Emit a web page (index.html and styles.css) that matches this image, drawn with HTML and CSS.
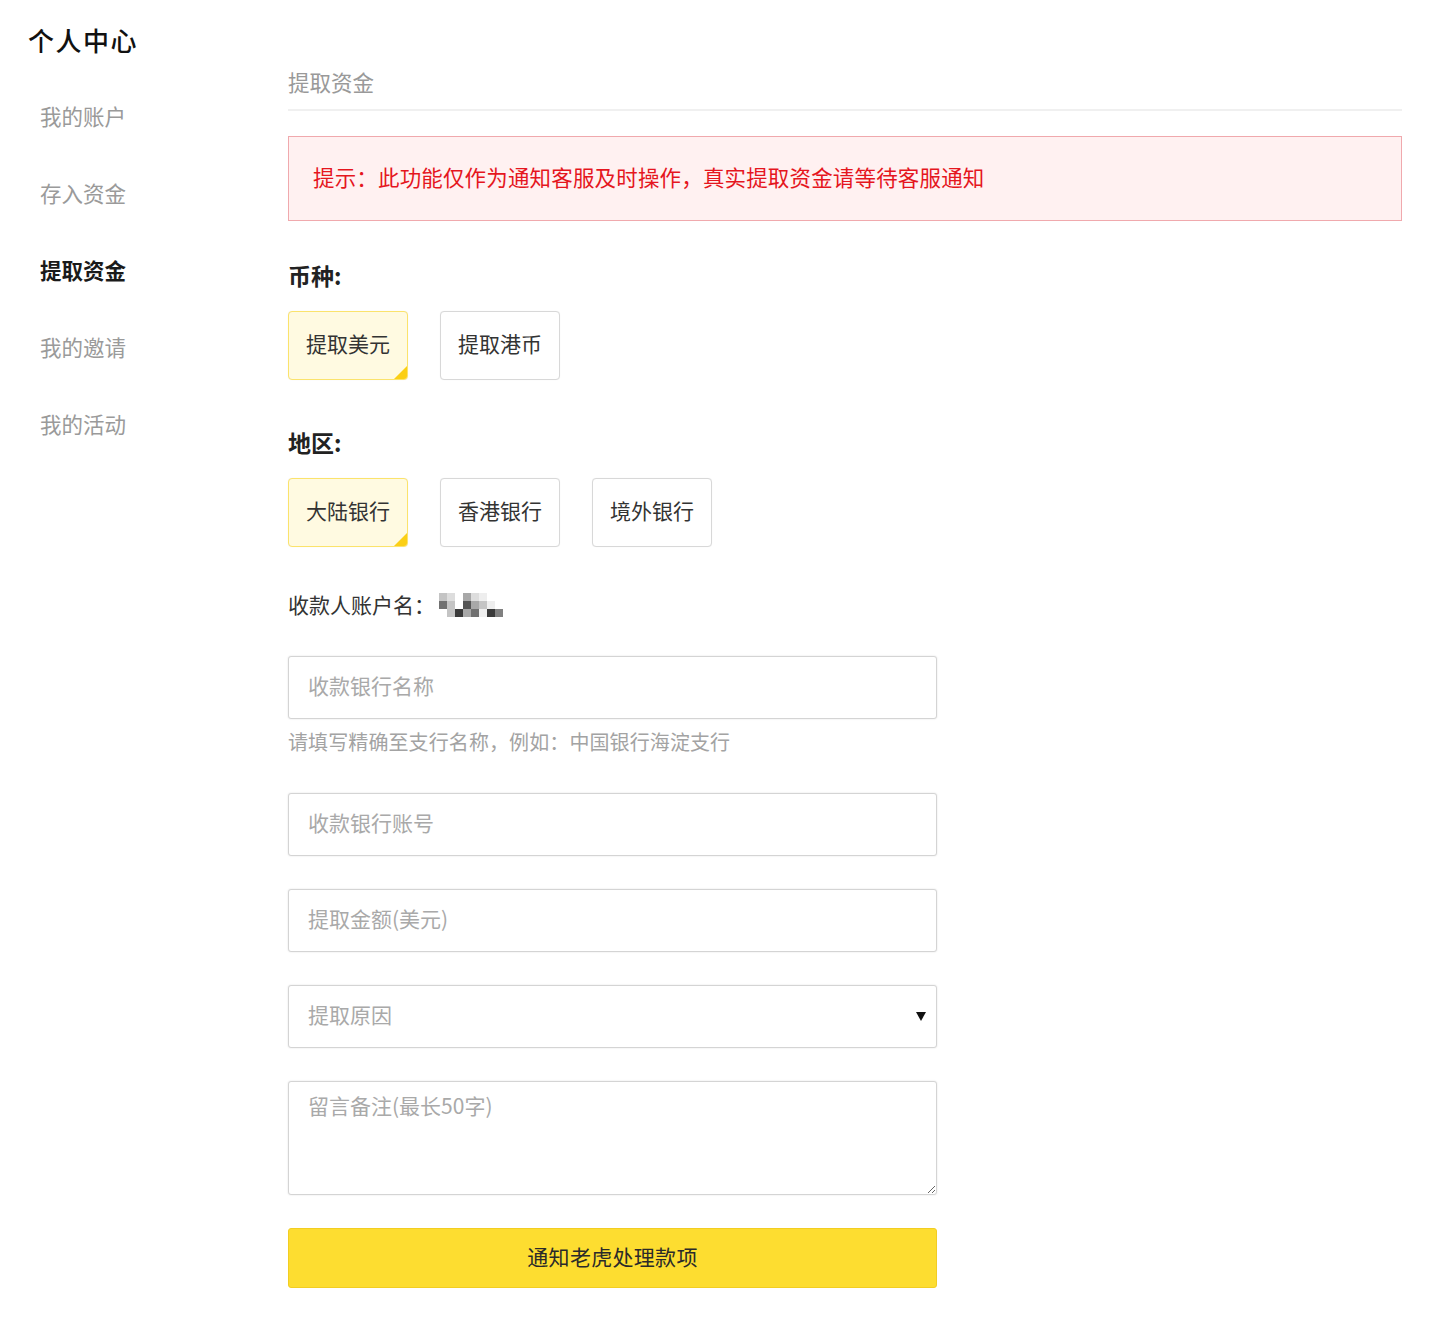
FILE: index.html
```html
<!DOCTYPE html>
<html lang="zh-CN">
<head>
<meta charset="utf-8">
<title>个人中心 - 提取资金</title>
<link rel="stylesheet" href="styles.css">
</head>
<body>
<div class="page">
  <aside class="sidebar">
    <h1 class="side-title">个人中心</h1>
    <nav class="side-nav">
      <a class="side-item">我的账户</a>
      <a class="side-item">存入资金</a>
      <a class="side-item active">提取资金</a>
      <a class="side-item">我的邀请</a>
      <a class="side-item">我的活动</a>
    </nav>
  </aside>
  <main class="main">
    <div class="main-head">提取资金</div>
    <div class="alert">提示：此功能仅作为通知客服及时操作，真实提取资金请等待客服通知</div>

    <div class="group-label first">币种:</div>
    <div class="choices">
      <button class="choice selected">提取美元</button>
      <button class="choice">提取港币</button>
    </div>

    <div class="group-label second">地区:</div>
    <div class="choices">
      <button class="choice selected">大陆银行</button>
      <button class="choice">香港银行</button>
      <button class="choice">境外银行</button>
    </div>

    <div class="account">
      <span class="account-label">收款人账户名：</span>
      <span class="mosaic">
        <i class="c2"></i><i class="c1"></i><i class="c0"></i><i class="c3"></i><i class="c1"></i><i class="c0b"></i><i class="c0"></i><i class="c0"></i>
        <i class="c5"></i><i class="c2"></i><i class="c0"></i><i class="c6"></i><i class="c3"></i><i class="c2"></i><i class="c0b"></i><i class="c0"></i>
        <i class="c0"></i><i class="c2"></i><i class="c7"></i><i class="c3"></i><i class="c5"></i><i class="c0b"></i><i class="c7"></i><i class="c4"></i>
      </span>
    </div>

    <form class="form">
      <input class="field f-bank" type="text" placeholder="收款银行名称">
      <div class="hint">请填写精确至支行名称，例如：中国银行海淀支行</div>
      <input class="field f-next" type="text" placeholder="收款银行账号">
      <input class="field f-gap" type="text" placeholder="提取金额(美元)">
      <div class="select-wrap f-gap">
        <select class="field select">
          <option>提取原因</option>
        </select>
        <span class="select-arrow"></span>
      </div>
      <textarea class="field area f-gap" placeholder="留言备注(最长50字)"></textarea>
      <button type="button" class="submit">通知老虎处理款项</button>
    </form>
  </main>
</div>
</body>
</html>
```

FILE: styles.css
```css
* { box-sizing: border-box; }

html, body {
  margin: 0;
  padding: 0;
  background: #ffffff;
}

body {
  font-family: "Noto Sans CJK SC", "Noto Sans", sans-serif;
  color: #333;
}

.page {
  display: flex;
  width: 1430px;
}

.sidebar {
  width: 288px;
  flex: none;
  padding-left: 28px;
}

.side-title {
  margin: 23px 0 0 0;
  font-size: 26px;
  line-height: 34px;
  font-weight: 500;
  color: #111;
  letter-spacing: 1.5px;
}

.side-nav {
  display: flex;
  flex-direction: column;
  padding-left: 12px;
  margin-top: 44px;
  gap: 47px;
}

.side-item {
  display: block;
  font-size: 21.5px;
  line-height: 30px;
  color: #9a9a9a;
}

.side-item.active {
  color: #1a1a1a;
  font-weight: 700;
}

.main {
  width: 1114px;
  flex: none;
  padding-top: 67px;
}

.main-head {
  font-size: 21.5px;
  line-height: 30px;
  color: #999;
  padding-bottom: 12px;
  border-bottom: 2px solid #f0f0f0;
}

.alert {
  margin-top: 25px;
  height: 85px;
  display: flex;
  align-items: center;
  padding: 0 24px 5px 24px;
  background: #fff1f1;
  border: 1px solid #f0a9ad;
  color: #e5161e;
  font-size: 21.5px;
  letter-spacing: 0.16px;
}

.group-label {
  font-size: 23px;
  line-height: 32px;
  font-weight: 700;
  color: #222;
}

.group-label.first { margin-top: 38px; }
.group-label.second { margin-top: 46px; }

.choices {
  display: flex;
  gap: 32px;
  margin-top: 20px;
}

.choice {
  position: relative;
  overflow: hidden;
  width: 120px;
  height: 69px;
  border: 1px solid #d8d8d8;
  border-radius: 4px;
  background: #fff;
  font-family: inherit;
  font-size: 21px;
  color: #333;
  padding: 0 0 5px 0;
  box-shadow: 0 0 1px rgba(0,0,0,0.08);
}

.choice.selected {
  background: #fffae1;
  border-color: #fbe36c;
}

.choice.selected::after {
  content: "";
  position: absolute;
  right: 0;
  bottom: 0;
  width: 0;
  height: 0;
  border-left: 13px solid transparent;
  border-bottom: 13px solid #fbcf16;
}

.account {
  display: flex;
  align-items: center;
  margin-top: 43px;
  height: 30px;
}

.account-label {
  font-size: 21px;
  line-height: 30px;
  color: #333;
  padding-bottom: 3px;
}

.mosaic {
  display: grid;
  grid-template-columns: repeat(8, 8px);
  grid-auto-rows: 8px;
  margin-left: 4px;
  margin-top: 0;
}

.mosaic i { display: block; }
.mosaic .c0 { background: transparent; }
.mosaic .c0b { background: #eeeeee; }
.mosaic .c1 { background: #dddddd; }
.mosaic .c2 { background: #c4c4c4; }
.mosaic .c3 { background: #a8a8a8; }
.mosaic .c4 { background: #808080; }
.mosaic .c5 { background: #707070; }
.mosaic .c6 { background: #555555; }
.mosaic .c7 { background: #3a3a3a; }

.form {
  display: flex;
  flex-direction: column;
  width: 649px;
  margin: 36px 0 0 0;
}

.field {
  display: block;
  width: 649px;
  height: 63px;
  border: 1px solid #d4d4d4;
  border-radius: 3px;
  box-shadow: 0 0 2px rgba(0,0,0,0.12);
  background: #fff;
  padding: 0 19px 5px 19px;
  font-family: inherit;
  font-size: 21px;
  color: #333;
  outline: none;
}

.field::placeholder {
  color: #a9a9a9;
}

.hint {
  margin-top: 9px;
  font-size: 20px;
  line-height: 28px;
  color: #a3a3a3;
  letter-spacing: 0.1px;
}

.f-next { margin-top: 37px; }
.f-gap { margin-top: 33px; }

.select-wrap {
  position: relative;
  width: 649px;
}

.select {
  appearance: none;
  -webkit-appearance: none;
  color: #a9a9a9;
}

.select-arrow {
  position: absolute;
  right: 11px;
  top: 27px;
  width: 0;
  height: 0;
  border-left: 5px solid transparent;
  border-right: 5px solid transparent;
  border-top: 9px solid #111;
}

.area {
  height: 114px;
  padding-top: 9px;
  line-height: 28px;
  resize: vertical;
}

.submit {
  margin-top: 33px;
  width: 649px;
  height: 60px;
  background: #fddd30;
  border: 1px solid #f2cd22;
  border-radius: 3px;
  font-family: inherit;
  font-size: 21px;
  color: #2a2a2a;
  padding: 0 0 4px 0;
  letter-spacing: 0.3px;
}
```
